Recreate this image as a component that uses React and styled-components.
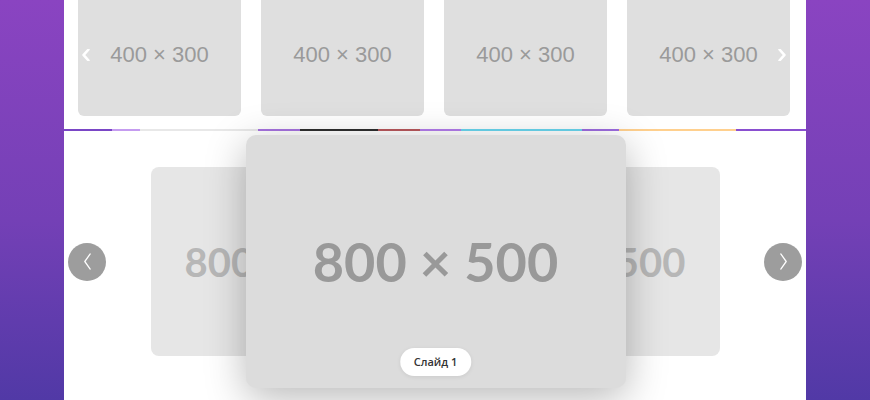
import styled, { createGlobalStyle } from "styled-components";

const GlobalStyle = createGlobalStyle`
  html, body {
    margin: 0;
    padding: 0;
  }

  body {
    min-height: 100vh;
    background: linear-gradient(180deg, #8a44c1 0%, #7440b6 55%, #5139a6 100%);
    font-family: "Liberation Sans", Arial, sans-serif;
    overflow: hidden;
  }
`;

// the thumbs row is pulled up 6px, so the panel gets those back to reach the bottom
const Panel = styled.div`
  width: 742px;
  margin: 0 auto;
  background-color: #fff;
  min-height: calc(100vh + 6px);
`;

const ThumbSection = styled.div`
  position: relative;
  padding: 0 16px 13px 14px;
`;

const Thumbs = styled.div`
  display: grid;
  grid-template-columns: repeat(4, 163px);
  gap: 20px;
  margin-top: -6px;
`;

const Thumb = styled.div`
  display: flex;
  justify-content: center;
  align-items: center;
  height: 122px;
  border-radius: 6px;
  background-color: #dfdfdf;
  color: #9a9a9a;
  font-size: 22px;
`;

const ThumbArrow = styled.div`
  position: absolute;
  top: 55px;
  ${(props) => (props.$right ? "right: 20px;" : "left: 18px;")}
  width: 8px;
  height: 12px;
  display: flex;

  > svg {
    width: 100%;
    height: 100%;
  }
`;

const Progress = styled.div`
  display: flex;
  height: 2px;
  background-color: #e6e6e6;

  > span {
    display: block;
    height: 100%;
  }
`;

const Carousel = styled.div`
  display: flex;
  justify-content: space-between;
  align-items: center;
  padding: 4px 4px 0;
`;

const NavButton = styled.button`
  display: flex;
  justify-content: center;
  align-items: center;
  width: 38px;
  height: 38px;
  padding: 0;
  border: none;
  border-radius: 50%;
  background-color: #9d9d9d;
  cursor: pointer;

  > svg {
    width: 9px;
    height: 17px;
  }
`;

const Stage = styled.div`
  display: flex;
  align-items: center;
`;

const Slide = styled.div`
  position: relative;
  display: flex;
  justify-content: center;
  align-items: center;
  flex-shrink: 0;
  background-color: #dcdcdc;
  color: #999;
  font-family: Lato, "Open Sans", sans-serif;
  font-weight: 700;
  line-height: 1;

  ${(props) =>
    props.$side
      ? `
    width: 250px;
    height: 189px;
    border-radius: 8px;
    opacity: 0.7;
    font-size: 40px;
    z-index: 1;
  `
      : `
    width: 380px;
    height: 253px;
    border-radius: 10px;
    font-size: 54px;
    z-index: 2;
    box-shadow: 0 10px 40px rgba(0, 0, 0, 0.28);
  `}

  ${(props) => props.$side === "left" && "margin-right: -155px;"}
  ${(props) => props.$side === "right" && "margin-left: -156px;"}
`;

const Caption = styled.div`
  position: absolute;
  bottom: 12px;
  left: 50%;
  transform: translateX(-50%);
  padding: 0 14px;
  height: 28px;
  line-height: 28px;
  border-radius: 14px;
  background-color: #fff;
  box-shadow: 0 1px 4px rgba(0, 0, 0, 0.08);
  color: #333;
  font-family: "Open Sans", sans-serif;
  font-size: 11px;
  font-weight: 600;
  white-space: nowrap;
`;

const segments = [
  [48, "#7a46c6"],
  [28, "#c59cf0"],
  [118, "#e8e8e8"],
  [42, "#a773e0"],
  [78, "#2e2e2e"],
  [42, "#b8585c"],
  [41, "#b37ceb"],
  [121, "#6ad6ee"],
  [37, "#9d6cdf"],
  [117, "#ffd08e"],
  [70, "#8a4fd0"],
];

const Chevron = ({ dir = "left", stroke = "#fff", width = 1.4 }) => (
  <svg viewBox="0 0 10 18" fill="none" preserveAspectRatio="none">
    <path
      d={dir === "left" ? "M8 1 L2 9 L8 17" : "M2 1 L8 9 L2 17"}
      stroke={stroke}
      strokeWidth={width}
      strokeLinecap="round"
      strokeLinejoin="round"
    />
  </svg>
);

const App = () => {
  return (
    <>
      <GlobalStyle />
      <Panel>
        <ThumbSection>
          <Thumbs>
            {[1, 2, 3, 4].map((n) => (
              <Thumb key={n}>400 × 300</Thumb>
            ))}
          </Thumbs>
          <ThumbArrow>
            <Chevron dir="left" width={3.4} />
          </ThumbArrow>
          <ThumbArrow $right>
            <Chevron dir="right" width={3.4} />
          </ThumbArrow>
        </ThumbSection>

        <Progress>
          {segments.map(([w, color], i) => (
            <span key={i} style={{ width: w, backgroundColor: color }} />
          ))}
        </Progress>

        <Carousel>
          <NavButton aria-label="Назад">
            <Chevron dir="left" />
          </NavButton>
          <Stage>
            <Slide $side="left">800 × 500</Slide>
            <Slide>
              800 × 500
              <Caption>Слайд 1</Caption>
            </Slide>
            <Slide $side="right">800 × 500</Slide>
          </Stage>
          <NavButton aria-label="Вперёд">
            <Chevron dir="right" />
          </NavButton>
        </Carousel>
      </Panel>
    </>
  );
};

export default App;
